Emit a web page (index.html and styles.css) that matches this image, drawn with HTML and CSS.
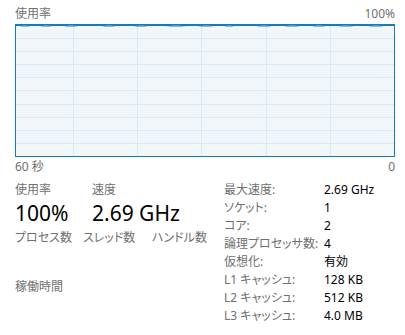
FILE: index.html
```html
<!DOCTYPE html>
<html lang="ja">
<head>
<meta charset="utf-8">
<link rel="stylesheet" href="styles.css">
</head>
<body>
<div class="panel">
  <div class="graph-head">
    <span>使用率</span>
    <span>100%</span>
  </div>
  <div class="graph">
    <svg class="grid" width="378" height="131" viewBox="0 0 378 131">
      <g stroke="#d9eaf4" stroke-width="1" shape-rendering="crispEdges">
        <line x1="57.5" y1="0" x2="57.5" y2="131"/>
        <line x1="121.5" y1="0" x2="121.5" y2="131"/>
        <line x1="185.5" y1="0" x2="185.5" y2="131"/>
        <line x1="250.5" y1="0" x2="250.5" y2="131"/>
        <line x1="314.5" y1="0" x2="314.5" y2="131"/>
        <line x1="0" y1="13.5" x2="378" y2="13.5"/>
        <line x1="0" y1="26.5" x2="378" y2="26.5"/>
        <line x1="0" y1="39.5" x2="378" y2="39.5"/>
        <line x1="0" y1="52.5" x2="378" y2="52.5"/>
        <line x1="0" y1="65.5" x2="378" y2="65.5"/>
        <line x1="0" y1="79.5" x2="378" y2="79.5"/>
        <line x1="0" y1="92.5" x2="378" y2="92.5"/>
        <line x1="0" y1="105.5" x2="378" y2="105.5"/>
        <line x1="0" y1="118.5" x2="378" y2="118.5"/>
      </g>
      <path d="M0 0.3 L4 0.3 Q9 1.3 14 0.3 L24 0.3 Q30 1.3 36 0.3 L48 0.3 Q55 1.3 62 0.3 L86 0.3 Q93 1.3 100 0.3 L118 0.3 Q125 1.3 132 0.3 L150 0.3 Q160 1.3 170 0.3 L182 0.3 Q190 1.3 198 0.3 L208 0.3 Q213 1.3 218 0.3 L240 0.3 Q248 1.3 256 0.3 L268 0.3 Q276 1.3 284 0.3 L296 0.3 Q303 1.3 310 0.3 L322 0.3 Q330 1.3 338 0.3 L352 0.3 Q360 1.3 368 0.3 L378 0.3" fill="none" stroke="#117dbb" stroke-width="1.2"/>
    </svg>
  </div>
  <div class="graph-foot">
    <span>60 秒</span>
    <span>0</span>
  </div>
  <div class="stats">
    <div class="left">
      <div class="big-row">
        <div class="big-item"><div class="lbl">使用率</div><div class="big">100%</div></div>
        <div class="big-item"><div class="lbl">速度</div><div class="big">2.69 GHz</div></div>
      </div>
      <div class="count-row">
        <div class="count c1 lbl">プロセス数</div>
        <div class="count c2 lbl">スレッド数</div>
        <div class="count lbl">ハンドル数</div>
      </div>
      <div class="uptime lbl">稼働時間</div>
    </div>
    <dl class="right">
      <dt>最大速度:</dt><dd>2.69 GHz</dd>
      <dt>ソケット:</dt><dd>1</dd>
      <dt>コア:</dt><dd>2</dd>
      <dt>論理プロセッサ数:</dt><dd>4</dd>
      <dt>仮想化:</dt><dd>有効</dd>
      <dt>L1 キャッシュ:</dt><dd>128 KB</dd>
      <dt>L2 キャッシュ:</dt><dd>512 KB</dd>
      <dt>L3 キャッシュ:</dt><dd>4.0 MB</dd>
    </dl>
  </div>
</div>
</body>
</html>
```

FILE: styles.css
```css
html, body {
  margin: 0;
  padding: 0;
  background: #ffffff;
}
body {
  font-family: "Noto Sans", "Noto Sans CJK JP", sans-serif;
  font-size: 12px;
  color: #707070;
  font-feature-settings: "palt";
}
.panel {
  width: 380px;
  padding: 4px 10px 0 15px;
}
.graph-head, .graph-foot {
  display: flex;
  justify-content: space-between;
  height: 20px;
  line-height: 20px;
}
.graph {
  box-sizing: border-box;
  width: 380px;
  height: 133px;
  border: 1px solid #117dbb;
  background: #f1f6fa;
}
.grid {
  display: block;
}
.stats {
  display: flex;
  padding-top: 4px;
}
.left {
  width: 209px;
  display: flex;
  flex-direction: column;
}
.lbl {
  line-height: 18px;
  color: #707070;
  white-space: nowrap;
}
.big-row {
  display: flex;
}
.big-item {
  width: 77px;
}
.big {
  font-size: 21px;
  line-height: 26px;
  color: #000000;
  white-space: nowrap;
  margin-top: 1px;
}
.count-row {
  display: flex;
  margin-top: 3px;
}
.count {
  width: 68px;
}
.count.c1 { width: 68px; }
.count.c2 { width: 69px; }
.uptime {
  margin-top: 31px;
}
.right {
  margin: 0;
  display: grid;
  grid-template-columns: 100px auto;
  line-height: 18px;
}
.right dt {
  color: #707070;
}
.right dd {
  margin: 0;
  color: #000000;
}
```
